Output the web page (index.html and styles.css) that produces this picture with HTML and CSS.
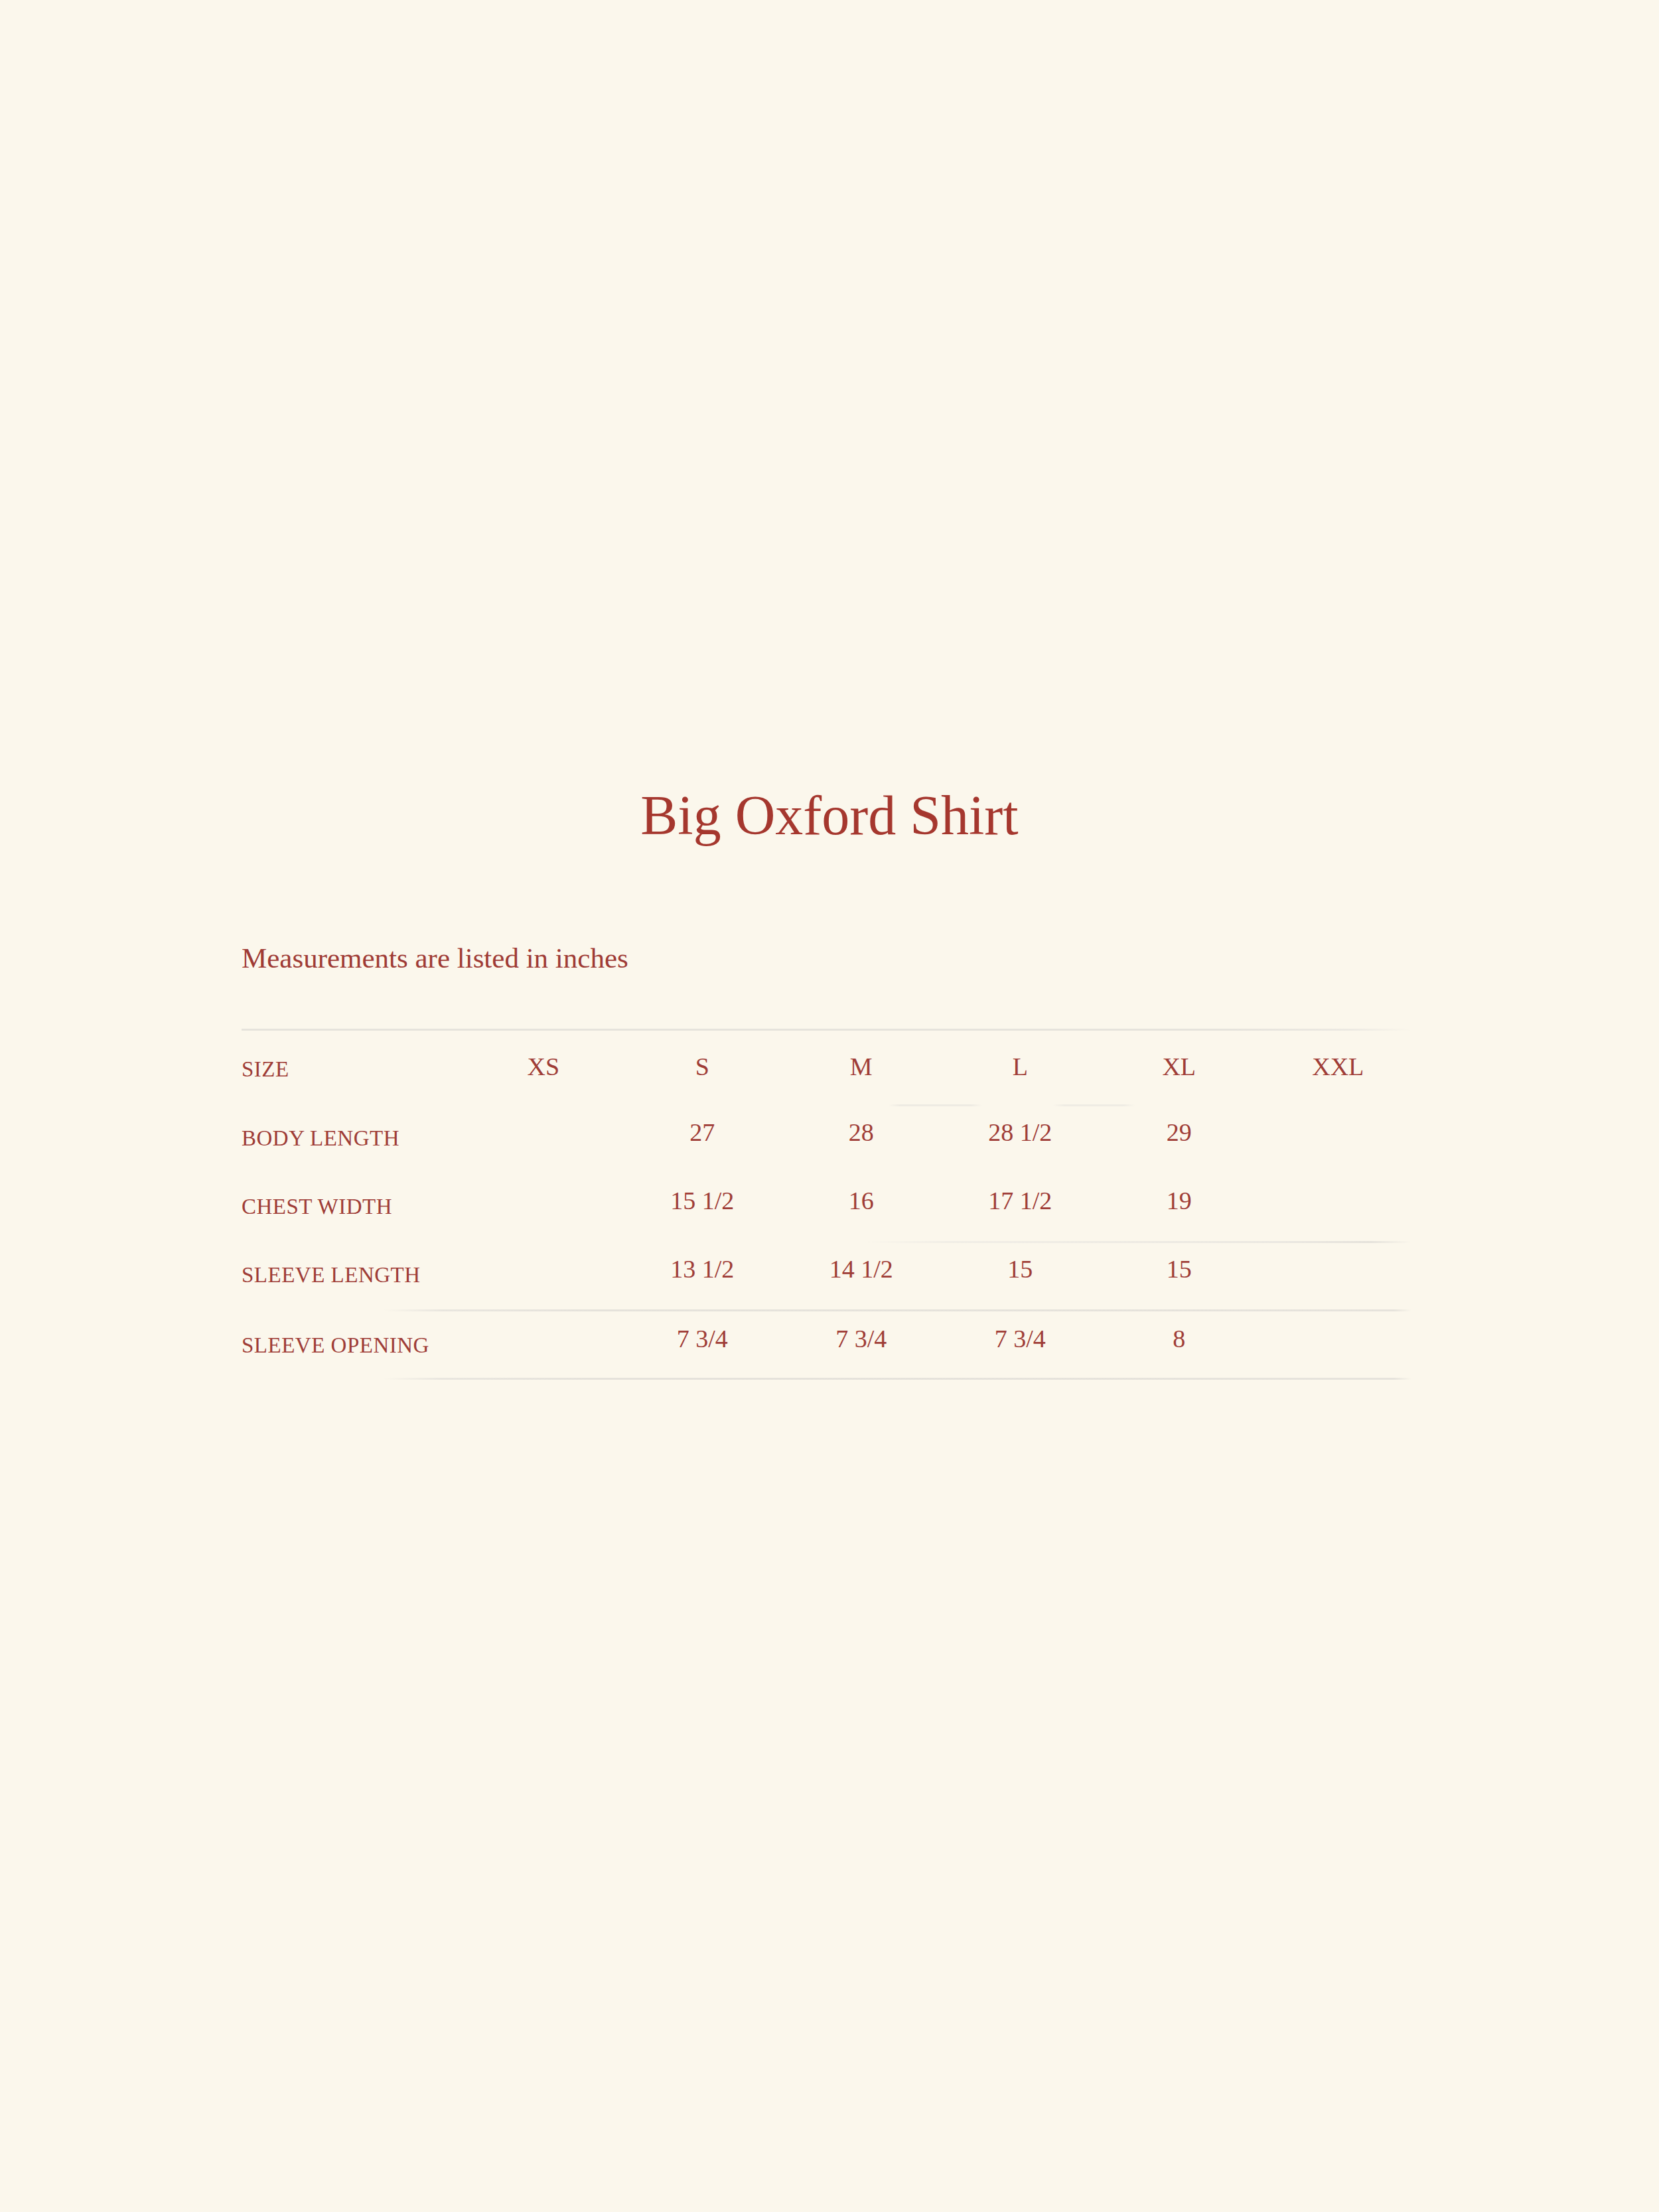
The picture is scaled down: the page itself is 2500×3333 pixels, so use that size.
FILE: index.html
```html
<!DOCTYPE html>
<html lang="en">
<head>
<meta charset="utf-8">
<title>Big Oxford Shirt – Size Chart</title>
<link rel="stylesheet" href="styles.css">
</head>
<body>
<main class="page">
  <h1 class="title">Big Oxford Shirt</h1>
  <p class="note">Measurements are listed in inches</p>
  <div class="chart">
    <div class="row head">
      <div class="label">SIZE</div>
      <div class="cell">XS</div>
      <div class="cell">S</div>
      <div class="cell">M</div>
      <div class="cell">L</div>
      <div class="cell">XL</div>
      <div class="cell">XXL</div>
    </div>
    <div class="row">
      <div class="label">BODY LENGTH</div>
      <div class="cell"></div>
      <div class="cell">27</div>
      <div class="cell">28</div>
      <div class="cell">28 1/2</div>
      <div class="cell">29</div>
      <div class="cell"></div>
    </div>
    <div class="row line-faint">
      <div class="label">CHEST WIDTH</div>
      <div class="cell"></div>
      <div class="cell">15 1/2</div>
      <div class="cell">16</div>
      <div class="cell">17 1/2</div>
      <div class="cell">19</div>
      <div class="cell"></div>
    </div>
    <div class="row line">
      <div class="label">SLEEVE LENGTH</div>
      <div class="cell"></div>
      <div class="cell">13 1/2</div>
      <div class="cell">14 1/2</div>
      <div class="cell">15</div>
      <div class="cell">15</div>
      <div class="cell"></div>
    </div>
    <div class="row line last">
      <div class="label">SLEEVE OPENING</div>
      <div class="cell"></div>
      <div class="cell">7 3/4</div>
      <div class="cell">7 3/4</div>
      <div class="cell">7 3/4</div>
      <div class="cell">8</div>
      <div class="cell"></div>
    </div>
  </div>
</main>
</body>
</html>
```

FILE: styles.css
```css
html, body {
  margin: 0;
  padding: 0;
  background: #fbf7ec;
}

body {
  font-family: "Liberation Serif", "Times New Roman", serif;
  color: #9f3d37;
  min-height: 3333px;
}

.page {
  padding: 1187px 364px 0;
}

.title {
  margin: 0;
  font-size: 84px;
  line-height: 1;
  font-weight: normal;
  text-align: center;
  color: #a5372e;
}

.note {
  margin: 151px 0 0;
  font-size: 43px;
  line-height: 1;
  color: #9f3b35;
}

.chart {
  margin-top: 85px;
}

.row {
  display: grid;
  grid-template-columns: 335px repeat(6, 1fr);
  height: 103px;
  box-sizing: border-box;
  background-repeat: no-repeat;
  background-position: left bottom;
  background-size: 100% 3px;
}

.label {
  padding-top: 32px;
  font-size: 33px;
  line-height: 1;
  letter-spacing: 0.5px;
  white-space: nowrap;
}

.cell {
  padding-top: 20px;
  font-size: 38px;
  line-height: 1;
  text-align: center;
  white-space: nowrap;
}

.head {
  height: 117px;
  background-image:
    linear-gradient(to right, #e6e3dc 0%, #e6e3dc 84%, #ece9e2 94%, rgba(251, 247, 236, 0) 99.5%),
    linear-gradient(to right, rgba(251, 247, 236, 0) 55%, #eeebe3 56%, #eeebe3 62%, rgba(251, 247, 236, 0) 63%, rgba(251, 247, 236, 0) 69%, #efece4 70%, #efece4 75%, rgba(251, 247, 236, 0) 76%);
  background-position: left top, left bottom;
  background-size: 100% 3px, 100% 3px;
}

.head .label {
  padding-top: 45px;
}

.head .cell {
  padding-top: 38px;
}

.last .label {
  padding-top: 35px;
}

.last .cell {
  padding-top: 22px;
}

.line-faint {
  background-image: linear-gradient(to right, rgba(251, 247, 236, 0) 53%, #f1eee6 60%, #ebe8e1 88%, #e5e2db 96%, rgba(251, 247, 236, 0) 99.5%);
}

.line {
  background-image: linear-gradient(to right, rgba(251, 247, 236, 0) 12%, #e9e6df 17%, #e5e2db 30%, #e6e3dc 98%, rgba(251, 247, 236, 0) 99.5%);
}
```
